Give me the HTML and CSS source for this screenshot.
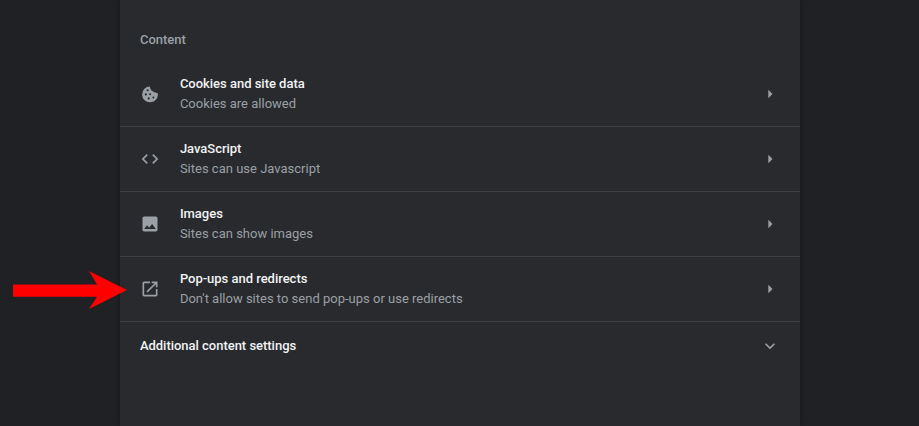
FILE: index.html
```html
<!DOCTYPE html>
<html lang="en">

<head>
    <meta charset="UTF-8">
    <title>Settings - Site settings</title>
    <link rel="stylesheet" href="styles.css">
</head>

<body>
    <!-- Painel de configurações -->
    <div class="card">
        <div class="section-title">Content</div>

        <div class="row">
            <svg class="icon" viewBox="0 0 24 24"><path fill-rule="evenodd" d="M12 3a9.500 9.500 0 1 0 9.500 9.500c-.1-.7-.2-1.300-.4-1.800-.9.500-2.100.2-2.500-.8-1 .5-2.500 0-2.800-1.200-1.500.2-2.800-1-2.600-2.600C12.200 6 11.700 4.500 12 3zM9.200 6.200a1.300 1.300 0 1 1 0 2.600 1.300 1.300 0 0 1 0-2.600zM7 11.200a1.300 1.300 0 1 1 0 2.600 1.300 1.300 0 0 1 0-2.600zM12.200 11a1.200 1.200 0 1 1 0 2.400 1.200 1.200 0 0 1 0-2.400zM16 15a1.200 1.200 0 1 1 0 2.400 1.200 1.200 0 0 1 0-2.400zM10.500 16a1.300 1.300 0 1 1 0 2.600 1.300 1.300 0 0 1 0-2.600z"/></svg>
            <div class="row-text">
                <div class="row-title">Cookies and site data</div>
                <div class="row-sub">Cookies are allowed</div>
            </div>
            <svg class="arrow" viewBox="0 0 24 24"><path d="M10 17l5-5-5-5v10z"/></svg>
        </div>

        <div class="row">
            <svg class="icon" viewBox="0 0 24 24"><path d="M9.400 16.600L4.800 12l4.600-4.600L8 6l-6 6 6 6 1.400-1.400zm5.200 0l4.600-4.600-4.600-4.600L16 6l6 6-6 6-1.400-1.400z"/></svg>
            <div class="row-text">
                <div class="row-title">JavaScript</div>
                <div class="row-sub">Sites can use Javascript</div>
            </div>
            <svg class="arrow" viewBox="0 0 24 24"><path d="M10 17l5-5-5-5v10z"/></svg>
        </div>

        <div class="row">
            <svg class="icon" viewBox="0 0 24 24"><path d="M21 19V5c0-1.100-.9-2-2-2H5c-1.100 0-2 .9-2 2v14c0 1.100.9 2 2 2h14c1.100 0 2-.9 2-2zM8.500 13.500l2.500 3.010L14.500 12l4.500 6H5l3.500-4.500z"/></svg>
            <div class="row-text">
                <div class="row-title">Images</div>
                <div class="row-sub">Sites can show images</div>
            </div>
            <svg class="arrow" viewBox="0 0 24 24"><path d="M10 17l5-5-5-5v10z"/></svg>
        </div>

        <div class="row">
            <svg class="icon" viewBox="0 0 24 24"><path d="M19 19H5V5h7V3H5c-1.110 0-2 .9-2 2v14c0 1.100.89 2 2 2h14c1.100 0 2-.9 2-2v-7h-2v7zM14 3v2h3.590l-9.830 9.830 1.410 1.410L19 6.410V10h2V3h-7z"/></svg>
            <div class="row-text">
                <div class="row-title">Pop-ups and redirects</div>
                <div class="row-sub">Don't allow sites to send pop-ups or use redirects</div>
            </div>
            <svg class="arrow" viewBox="0 0 24 24"><path d="M10 17l5-5-5-5v10z"/></svg>
        </div>

        <div class="row row-more">
            <div class="row-text">
                <div class="row-title">Additional content settings</div>
            </div>
            <svg class="arrow" viewBox="0 0 24 24"><path d="M7.410 8.590L12 13.170l4.590-4.580L18 10l-6 6-6-6z"/></svg>
        </div>
    </div>

    <!-- Seta vermelha por cima da página -->
    <svg class="callout" width="116" height="40" viewBox="0 0 116 40"><path d="M0 13.500H84L76 0l38 19-38 19 8-12.300H0z"/></svg>
</body>

</html>
```

FILE: styles.css
```css
* {
    margin: 0;
    padding: 0;
    box-sizing: border-box;
}

body {
    font-family: Roboto, 'Liberation Sans', Arial, sans-serif;
    background: #202124;
    color: #e8eaed;
    height: 426px;
    overflow: hidden;
    display: flex;
    justify-content: center;
    position: relative;
}

/* PAINEL */
.card {
    width: 680px;
    height: 426px;
    background: #292a2d;
    box-shadow: 0 0 6px rgba(0, 0, 0, 0.35);
    padding-top: 32px;
}

.section-title {
    color: #9aa0a6;
    font-size: 13px;
    font-weight: 500;
    line-height: 15px;
    padding: 0 20px 0 20.4px;
    margin-bottom: 15px;
}

/* LINHAS */
.row {
    height: 65px;
    display: flex;
    align-items: center;
    padding: 0 20px;
    border-bottom: 1px solid #3f4042;
}

.row-more {
    height: 48px;
    border-bottom: none;
}

.icon {
    width: 20px;
    height: 20px;
    margin-right: 20px;
    fill: #9aa0a6;
    flex-shrink: 0;
}

.arrow {
    width: 20px;
    height: 20px;
    fill: #9aa0a6;
    flex-shrink: 0;
}

.row-text {
    flex: 1;
    padding-left: 0.4px;
}

.row-title {
    font-size: 13px;
    font-weight: 500;
    line-height: 20px;
    color: #f1f3f4;
    letter-spacing: -0.02px;
}

.row-sub {
    font-size: 13px;
    line-height: 20px;
    color: #9aa0a6;
}

/* SETA */
.callout {
    position: absolute;
    left: 13px;
    top: 271px;
    fill: #fe0000;
}
```
